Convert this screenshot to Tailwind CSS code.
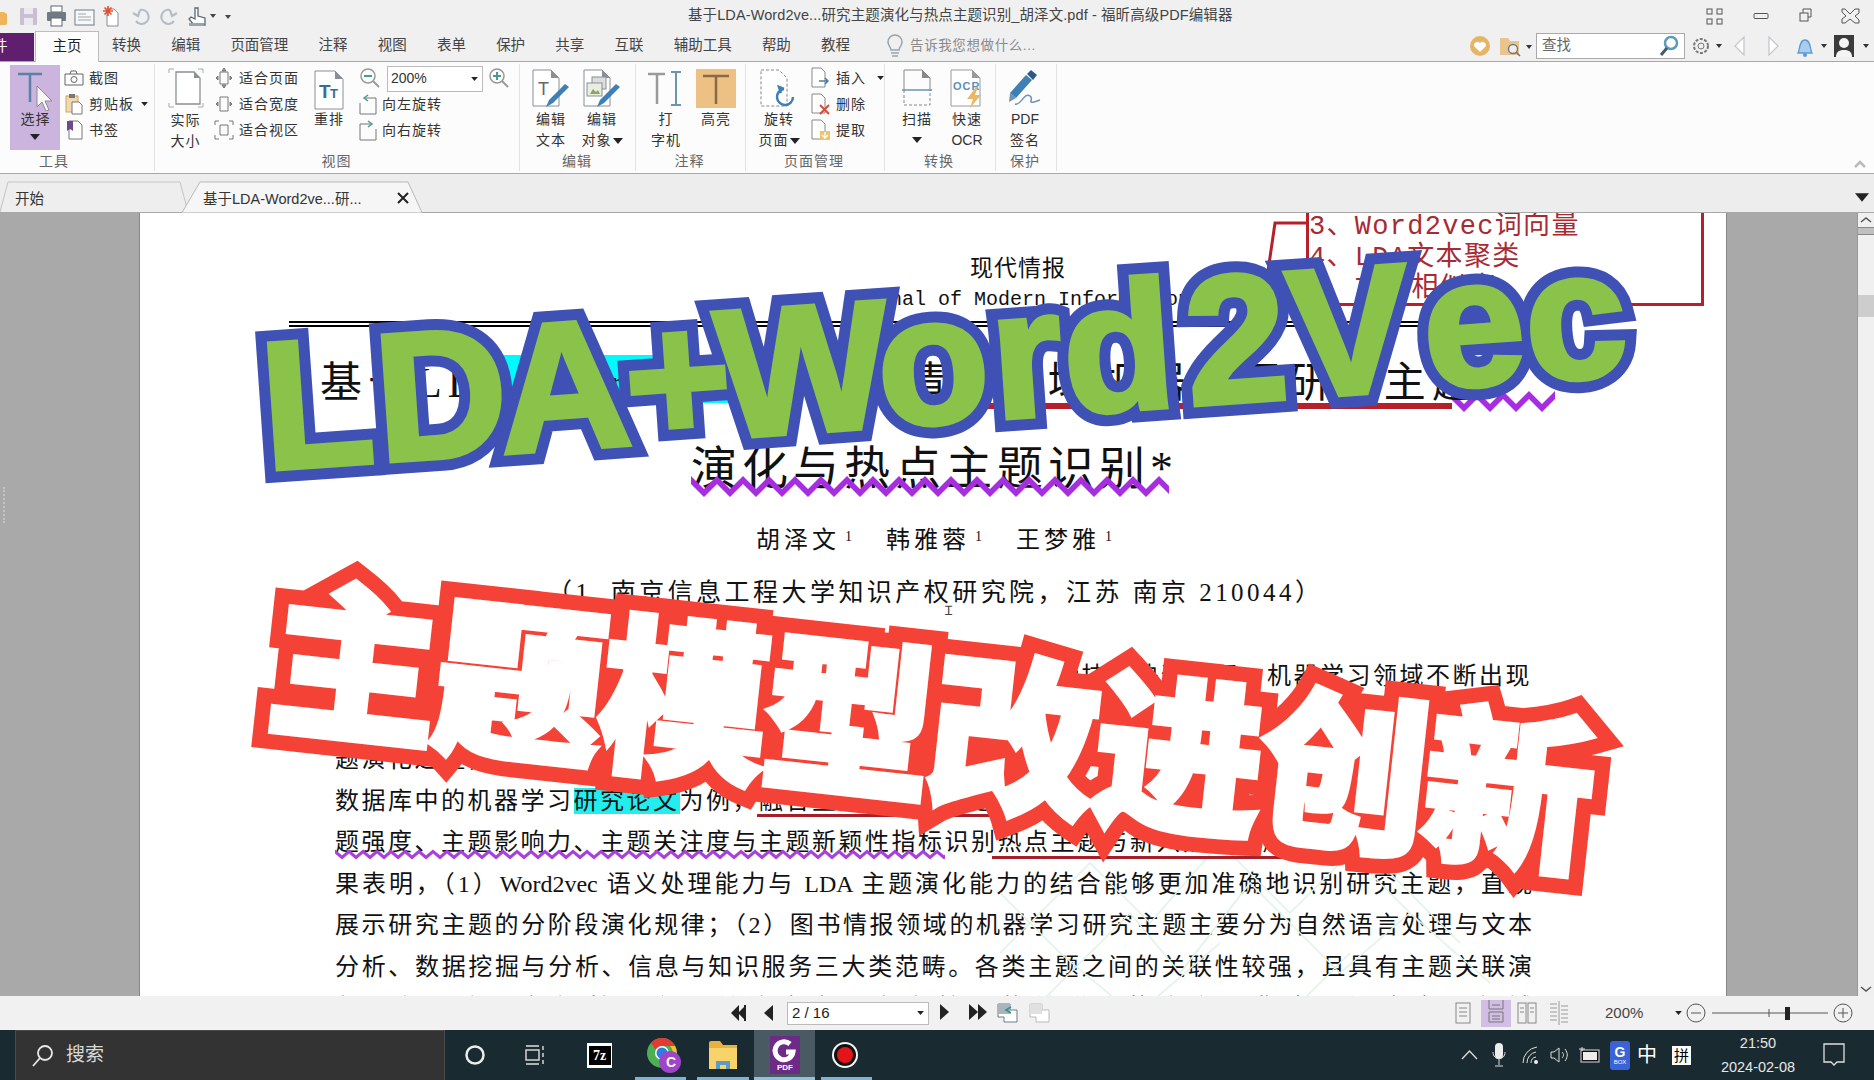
<!DOCTYPE html>
<html lang="zh">
<head>
<meta charset="utf-8">
<title>福昕高级PDF编辑器</title>
<script src="https://cdn.jsdelivr.net/npm/@tailwindcss/browser@4"></script>
</head>
<body class="overflow-hidden">
<svg class="absolute w-0 h-0">
  <defs>
    <symbol id="tri" viewBox="0 0 10 6"><path d="M0 0h10L5 6z" fill="#222"/></symbol>
    <pattern id="wavebig" width="26" height="24" patternUnits="userSpaceOnUse"><path d="M-13 18L0 5 13 18 26 5 39 18" fill="none" stroke="#a62ee0" stroke-width="5.500"/></pattern>
    <pattern id="wavesmall" width="14" height="13" patternUnits="userSpaceOnUse"><path d="M-7 9.500L0 3.500 7 9.500 14 3.500 21 9.500" fill="none" stroke="#a93fdc" stroke-width="3.200"/></pattern>
  </defs>
</svg>
<div class="relative w-[1874px] h-[1080px] overflow-hidden flex flex-col bg-[#f0f0f0] text-[#333] font-['Liberation_Sans','Noto_Sans_CJK_SC',sans-serif]">

  <!-- title bar -->
  <div class="h-[31px] flex items-center shrink-0">
    <div class="w-[688px] flex items-center h-full relative">
      <svg width="240" height="24" viewBox="0 0 240 24" class="shrink-0">
        <path d="M-4 8h8l3 2v9a2 2 0 0 1-2 2H-4z" fill="#efb55d"/>
        <rect x="20" y="4" width="17" height="17" rx="1" fill="#c9bfd4"/><rect x="24" y="4" width="9" height="6" fill="#ece8f0"/><rect x="24" y="14" width="9" height="7" fill="#ece8f0"/>
        <rect x="51" y="2" width="11" height="6" fill="#fff" stroke="#5c6770"/><rect x="47" y="8" width="19" height="9" rx="1" fill="#6f7a84"/><rect x="51" y="14" width="11" height="8" fill="#fff" stroke="#5c6770"/>
        <rect x="75" y="6" width="19" height="15" fill="#f8f8f8" stroke="#6f7a84"/><path d="M78 10h8M78 13h13M78 16h13" stroke="#9aa3ab"/>
        <path d="M107 5h7l4 4v13h-11z" fill="#fff" stroke="#8a8f96"/><path d="M108 2v10M103 7h10M104.500 3.500l7 7M111.500 3.500l-7 7" stroke="#e0502f" stroke-width="1.600"/>
        <path d="M140 6a7 7 0 1 1-4 11M140 6l-2 6-5-3" fill="none" stroke="#b5bcc4" stroke-width="2.200"/>
        <path d="M170 6a7 7 0 1 0 4 11M170 6l2 6 5-3" fill="none" stroke="#b5bcc4" stroke-width="2.200"/>
        <path d="M195 4v11l-4-2-2 2 5 6h11v-7l-7-2V4z" fill="#fff" stroke="#5c6770" stroke-width="1.300"/><rect x="189" y="19" width="15" height="3" fill="#9aa3ab"/>
        <path d="M210 10h6l-3 4zM225 8h6M225 11h6l-3 4z" fill="#444"/>
      </svg>
    </div>
    <div class="text-[14.5px] tracking-[0.1px] text-[#444] whitespace-nowrap w-[556px]">基于LDA-Word2ve...研究主题演化与热点主题识别_胡泽文.pdf - 福昕高级PDF编辑器</div>
    <div class="ml-[462px] w-[168px] relative h-full flex items-center">
      <svg width="168" height="20" viewBox="0 0 168 20">
        <g fill="none" stroke="#555"><rect x="1" y="3" width="5" height="5"/><rect x="11" y="3" width="5" height="5"/><rect x="1" y="13" width="5" height="5"/><rect x="11" y="13" width="5" height="5"/>
        <rect x="48" y="7.500" width="14" height="5" rx="1"/><rect x="94" y="7" width="8" height="8"/><path d="M97 7V3h8v8h-3"/>
        <path d="M139 3l5 5 5-5 4 0 0 4-4 3 4 4 0 3-4 0-5-4-5 4-3 0 0-4 4-3-4-4 0-3z"/></g>
      </svg>
    </div>
  </div>

  <!-- ribbon tabs -->
  <div class="h-[31px] flex shrink-0 border-b border-[#a8a8a8] relative">
    <div class="w-[34px] mt-[2px] h-[28px] bg-[#5f1f6e] text-white text-[14.5px] flex items-center overflow-hidden"><span class="ml-[-7px]">件</span></div>
    <div class="ml-[1px] w-[64px] h-[31px] bg-[#fcfcfc] border border-b-0 border-[#bcbcbc] text-[14.5px] flex items-center justify-center text-[#222]">主页</div>
    <div class="ml-[13px] flex items-center gap-[30.2px] text-[14.5px] text-[#444]">
      <span>转换</span><span>编辑</span><span>页面管理</span><span>注释</span><span>视图</span><span>表单</span><span>保护</span><span>共享</span><span>互联</span><span>辅助工具</span><span>帮助</span><span>教程</span>
    </div>
    <div class="ml-[36px] flex items-center gap-[6px]">
      <svg width="18" height="24" viewBox="0 0 18 24" fill="none" stroke="#9aa3ab" stroke-width="1.500"><path d="M5 16c0-3-3-4-3-8a7 7 0 0 1 14 0c0 4-3 5-3 8zM5 19h8M6 22h6"/></svg>
      <span class="text-[13.500px] text-[#8a8a8a] tracking-[0.6px]">告诉我您想做什么...</span>
    </div>
    <div class="absolute left-[1469px] top-0 h-full w-[405px] flex items-center">
      <svg width="67" height="24" viewBox="0 0 67 24" class="shrink-0">
        <circle cx="11" cy="12" r="10" fill="#e5b465"/><path d="M11 18l-6-6a3.500 3.500 0 0 1 6-3 3.500 3.500 0 0 1 6 3z" fill="#fff"/>
        <path d="M31 4h8l2 3h9v14H31z" fill="#e8c48e"/><circle cx="44" cy="15" r="4.500" fill="#eee" stroke="#777" stroke-width="1.400"/><path d="M47 18l4 4" stroke="#777" stroke-width="1.600"/>
        <path d="M57 11h6l-3 4z" fill="#333"/>
      </svg>
      <div class="w-[149px] h-[26px] bg-white border border-[#aaa] flex items-center justify-between px-[5px]">
        <span class="text-[14.5px] text-[#666]">查找</span>
        <svg width="20" height="22" viewBox="0 0 20 22" fill="none"><circle cx="12" cy="8" r="6" stroke="#5d9bbd" stroke-width="2.500"/><path d="M8 13l-6 7" stroke="#3f5a78" stroke-width="3"/></svg>
      </div>
      <svg width="189" height="24" viewBox="0 0 189 24" class="shrink-0">
        <circle cx="16" cy="12" r="7" fill="none" stroke="#777" stroke-width="2" stroke-dasharray="3 1.500"/><circle cx="16" cy="12" r="3" fill="none" stroke="#777"/>
        <path d="M31 10h6l-3 4z" fill="#333"/>
        <path d="M59 3v18l-9-9z" fill="#fff" stroke="#c4c8cc" stroke-width="1.300"/><path d="M84 3v18l9-9z" fill="#fff" stroke="#c4c8cc" stroke-width="1.300"/>
        <path d="M113 19c2-3 1-13 7-13s5 10 7 13z" fill="#a8cdee" stroke="#5b9bd5" stroke-width="1.300"/><circle cx="120" cy="21" r="2" fill="#5b9bd5"/>
        <path d="M136 10h6l-3 4z" fill="#333"/>
        <rect x="149" y="1" width="20" height="22" fill="#3b3b3b"/><circle cx="159" cy="9" r="5" fill="#f4f4f4"/><path d="M151 23c0-6 4-7 8-7s8 1 8 7z" fill="#f4f4f4"/>
        <path d="M178 10h6l-3 4z" fill="#333"/>
      </svg>
    </div>
  </div>

  <!-- ribbon -->
  <div class="h-[112px] shrink-0 bg-[#fcfcfc] border-b border-[#a8a8a8] flex text-[14px] tracking-[1px] text-[#333] relative">

    <div class="w-[155px] flex flex-col border-r border-[#e2e2e2] my-[2px]">
      <div class="h-[88px] flex pl-[10px] pt-[1px]">
        <div class="w-[50px] h-[85px] bg-[#cbb5df] flex flex-col items-center">
          <svg width="44" height="44" viewBox="0 0 44 44" class="mt-[2px] shrink-0"><path d="M5 7h24M17 7v28" stroke="#5a82a8" stroke-width="2.500" fill="none"/><path d="M24 19v21l5-5 4 9 3-1-4-9h7z" fill="#f7f7f7" stroke="#8b8b8b"/></svg>
          <span class="leading-[21px] mt-[-2px] mr-[-1px]">选择</span>
          <svg width="10" height="6" class="mt-[4px]"><use href="#tri"/></svg>
        </div>
        <div class="ml-[4px] flex flex-col">
          <div class="h-[26px] flex items-center gap-[5px]"><svg width="20" height="18" viewBox="0 0 20 18" fill="none" stroke="#666"><path d="M1 5h18v11H1zM6 5l1-3h5l1 3"/><circle cx="10" cy="10.500" r="3"/></svg><span>截图</span></div>
          <div class="h-[26px] flex items-center gap-[5px]"><svg width="20" height="22" viewBox="0 0 20 22"><rect x="2" y="3" width="12" height="16" fill="#f1d9ad" stroke="#caa569"/><rect x="5" y="1" width="6" height="4" fill="#777"/><path d="M8 9h7l3 3v9H8z" fill="#fff" stroke="#777"/></svg><span>剪贴板</span><svg width="7" height="4" class="ml-[2px]"><use href="#tri"/></svg></div>
          <div class="h-[26px] flex items-center gap-[5px]"><svg width="20" height="22" viewBox="0 0 20 22"><path d="M5 2h9l4 4v14H5z" fill="#fff" stroke="#777"/><path d="M3 2h6v10l-3-2-3 2z" fill="#6d4a8c"/></svg><span>书签</span></div>
        </div>
      </div>
      <div class="h-[18px] leading-[18px] text-center text-[#666] pr-[46px]">工具</div>
    </div>

    <div class="w-[365px] flex flex-col border-r border-[#e2e2e2] my-[2px]">
      <div class="h-[88px] flex">
        <div class="ml-[13px] w-[35px] flex flex-col items-center">
          <svg width="36" height="40" viewBox="0 0 36 40" class="mt-[4px]"><path d="M8 4h18l6 6v26H8z" fill="#fff" stroke="#8a8f96" stroke-width="1.300"/><path d="M26 4v6h6z" fill="#8a8f96"/><path d="M1 5V1h5M35 5V1h-5M1 35v4h5M35 35v4h-5" stroke="#aaa" fill="none"/></svg>
          <span class="leading-[21px] mt-[2px] text-center w-[36px]">实际大小</span>
        </div>
        <div class="ml-[11px] flex flex-col pt-[1px]">
          <div class="h-[26px] flex items-center gap-[5px]"><svg width="20" height="20" viewBox="0 0 20 20" fill="none" stroke="#777"><path d="M6 4h8v12H6z"/><path d="M10 0l2 3H8zM10 20l2-3H8zM2 10l2-2v4zM18 10l-2-2v4z" fill="#999"/></svg><span>适合页面</span></div>
          <div class="h-[26px] flex items-center gap-[5px]"><svg width="20" height="20" viewBox="0 0 20 20" fill="none" stroke="#777"><path d="M6 3h8v14H6z"/><path d="M2 10l2-2v4zM18 10l-2-2v4z" fill="#999"/></svg><span>适合宽度</span></div>
          <div class="h-[26px] flex items-center gap-[5px]"><svg width="20" height="20" viewBox="0 0 20 20" fill="none" stroke="#777"><path d="M6 5h8v10H6zM1 5V1h4M19 5V1h-4M1 15v4h4M19 15v4h-4"/></svg><span>适合视区</span></div>
        </div>
        <div class="ml-[15px] w-[30px] flex flex-col items-center">
          <svg width="30" height="40" viewBox="0 0 30 40" class="mt-[6px]"><path d="M1 1h20l8 8v30H1z" fill="#fff" stroke="#8a8f96"/><path d="M21 1v8h8z" fill="#8a8f96"/><text x="5" y="28" font-size="19" font-weight="700" fill="#3c6d8f" font-family="Liberation Sans">T</text><text x="16" y="28" font-size="13" font-weight="700" fill="#3c6d8f" font-family="Liberation Sans">T</text></svg>
          <span class="leading-[21px] whitespace-nowrap mt-[-1px]">重排</span>
        </div>
        <div class="ml-[15px] flex flex-col pt-[1px]">
          <div class="h-[26px] flex items-center">
            <svg width="22" height="22" viewBox="0 0 22 22" fill="none"><circle cx="9" cy="9" r="7" stroke="#999" stroke-width="1.500"/><path d="M5 9h8" stroke="#4d9a8e" stroke-width="2"/><path d="M14 14l6 6" stroke="#999" stroke-width="2"/></svg>
            <div class="ml-[6px] w-[96px] h-[26px] bg-white border border-[#bbb] flex items-center justify-between pl-[3px] pr-[4px] text-[14px] tracking-[0px] mt-[1px]"><span>200%</span><svg width="7" height="4"><use href="#tri"/></svg></div>
            <svg width="22" height="22" viewBox="0 0 22 22" fill="none" class="ml-[5px]"><circle cx="9" cy="9" r="7" stroke="#999" stroke-width="1.500"/><path d="M5 9h8M9 5v8" stroke="#4d9a8e" stroke-width="2"/><path d="M14 14l6 6" stroke="#999" stroke-width="2"/></svg>
          </div>
          <div class="h-[26px] flex items-center gap-[5px]"><svg width="18" height="22" viewBox="0 0 18 22" fill="none" stroke="#777"><path d="M5 5h12v16H1V10"/><path d="M9 2L5 5l4 3" stroke="#4d9a8e" stroke-width="1.500"/></svg><span>向左旋转</span></div>
          <div class="h-[26px] flex items-center gap-[5px]"><svg width="18" height="22" viewBox="0 0 18 22" fill="none" stroke="#777"><path d="M13 5H1v16h16V10"/><path d="M9 2l4 3-4 3" stroke="#4d9a8e" stroke-width="1.500"/></svg><span>向右旋转</span></div>
        </div>
      </div>
      <div class="h-[18px] leading-[18px] text-center text-[#666] pr-[1px]">视图</div>
    </div>

    <div class="w-[116px] flex flex-col border-r border-[#e2e2e2] my-[2px]">
      <div class="h-[88px] flex">
        <div class="ml-[13px] w-[36px] flex flex-col items-center">
          <svg width="38" height="40" viewBox="0 0 38 40" class="mt-[5px]"><path d="M1 1h18l8 8v28H1z" fill="#fff" stroke="#8a8f96"/><path d="M19 1v8h8z" fill="#8a8f96"/><text x="6" y="26" font-size="18" fill="#666" font-family="Liberation Sans">T</text><path d="M14 38l3-7 16-16 4 3-16 16z" fill="#3e7fb5"/></svg>
          <span class="leading-[21px] text-center w-[30px]">编辑文本</span>
        </div>
        <div class="ml-[15px] w-[36px] flex flex-col items-center">
          <svg width="38" height="40" viewBox="0 0 38 40" class="mt-[5px]"><path d="M1 1h18l8 8v28H1z" fill="#fff" stroke="#8a8f96"/><path d="M19 1v8h8z" fill="#8a8f96"/><rect x="9" y="8" width="14" height="12" fill="#ddd" stroke="#8a8f96"/><rect x="4" y="14" width="15" height="13" fill="#e8eee0" stroke="#8a8f96"/><path d="M7 25l3-5 3 3 2-2 2 4z" fill="#8aa46a"/><path d="M14 38l3-7 16-16 4 3-16 16z" fill="#3e7fb5"/></svg>
          <span class="leading-[21px] whitespace-nowrap">编辑</span>
          <span class="leading-[21px] whitespace-nowrap flex items-center">对象<svg width="10" height="6" class="ml-[1px]"><use href="#tri"/></svg></span>
        </div>
      </div>
      <div class="h-[18px] leading-[18px] text-center text-[#666] pr-[1px]">编辑</div>
    </div>

    <div class="w-[110px] flex flex-col border-r border-[#e2e2e2] my-[2px]">
      <div class="h-[88px] flex">
        <div class="ml-[12px] w-[36px] flex flex-col items-center">
          <svg width="38" height="40" viewBox="0 0 38 40" class="mt-[5px]"><path d="M1 5h17M10 5v30" stroke="#9a9a9a" stroke-width="2.500" fill="none"/><path d="M24 3h10M29 3v33M24 36h10" stroke="#6d94b0" stroke-width="2" fill="none"/></svg>
          <span class="leading-[21px] whitespace-nowrap">打</span>
          <span class="leading-[21px] whitespace-nowrap">字机</span>
        </div>
        <div class="ml-[12px] w-[40px] flex flex-col items-center">
          <div class="w-[40px] h-[39px] bg-[#edc183] mt-[5px] flex items-center justify-center"><svg width="30" height="34" viewBox="0 0 30 34"><path d="M2 4h26M15 4v28" stroke="#8a6a45" stroke-width="2.500" fill="none"/></svg></div>
          <span class="leading-[21px] whitespace-nowrap mt-[1px]">高亮</span>
        </div>
      </div>
      <div class="h-[18px] leading-[18px] text-center text-[#666] pr-[2px]">注释</div>
    </div>

    <div class="w-[139px] flex flex-col border-r border-[#e2e2e2] my-[2px]">
      <div class="h-[88px] flex">
        <div class="ml-[12px] w-[42px] flex flex-col items-center">
          <svg width="38" height="40" viewBox="0 0 38 40" class="mt-[5px]"><path d="M1 1h18l8 8v28H1z" fill="#fff" stroke="#888" stroke-dasharray="3 2"/><path d="M33 28a8 8 0 1 1-9-8M24 20l-5-2 2 6" fill="none" stroke="#3e7fb5" stroke-width="2.500"/></svg>
          <span class="leading-[21px] whitespace-nowrap">旋转</span>
          <span class="leading-[21px] whitespace-nowrap flex items-center">页面<svg width="10" height="6" class="ml-[1px]"><use href="#tri"/></svg></span>
        </div>
        <div class="ml-[11px] flex flex-col pt-[1px]">
          <div class="h-[26px] flex items-center gap-[5px]"><svg width="20" height="22" viewBox="0 0 20 22" fill="none"><path d="M1 1h9l4 4v15H1z" fill="#fff" stroke="#888"/><path d="M8 14h9M14 11l3 3-3 3" stroke="#4a7fa8" stroke-width="1.500"/></svg><span>插入</span><svg width="7" height="4" class="ml-[6px]"><use href="#tri"/></svg></div>
          <div class="h-[26px] flex items-center gap-[5px]"><svg width="20" height="22" viewBox="0 0 20 22" fill="none"><path d="M1 1h9l4 4v15H1z" fill="#fff" stroke="#888"/><path d="M9 12l9 9M18 12l-9 9" stroke="#d0503d" stroke-width="2"/></svg><span>删除</span></div>
          <div class="h-[26px] flex items-center gap-[5px]"><svg width="20" height="22" viewBox="0 0 20 22" fill="none"><path d="M1 1h9l4 4v15H1z" fill="#fff" stroke="#888"/><rect x="9" y="12" width="10" height="9" fill="#eec36e"/><path d="M14 13v6M11 16l3 3 3-3" stroke="#fff" stroke-width="1.300"/></svg><span>提取</span></div>
        </div>
      </div>
      <div class="h-[18px] leading-[18px] text-center text-[#666] pr-[2px]">页面管理</div>
    </div>

    <div class="w-[111px] flex flex-col border-r border-[#e2e2e2] my-[2px]">
      <div class="h-[88px] flex">
        <div class="ml-[16px] w-[32px] flex flex-col items-center">
          <svg width="32" height="40" viewBox="0 0 32 40" class="mt-[5px]" fill="none"><path d="M3 21V1h18l8 8v12" stroke="#888"/><path d="M21 1v8h8z" fill="#888"/><path d="M1 21h30" stroke="#6d94b0" stroke-width="1.500"/><path d="M3 21v15h26V21" stroke="#888" stroke-dasharray="3 2"/></svg>
          <span class="leading-[21px] whitespace-nowrap">扫描</span>
          <svg width="10" height="6" class="mt-[7px]"><use href="#tri"/></svg>
        </div>
        <div class="ml-[17px] w-[34px] flex flex-col items-center">
          <svg width="34" height="40" viewBox="0 0 34 40" class="mt-[5px]"><path d="M1 1h21l8 8v28H1z" fill="#fff" stroke="#999"/><path d="M22 1v8h8z" fill="#999"/><text x="3" y="21" font-size="11" font-weight="700" fill="#5d8fb5" font-family="Liberation Sans">OCR</text><path d="M26 18l-9 12h6l-3 9 11-13h-6l3-8z" fill="#e9b867"/></svg>
          <span class="leading-[21px] whitespace-nowrap">快速</span>
          <span class="leading-[21px] whitespace-nowrap tracking-[0px]">OCR</span>
        </div>
      </div>
      <div class="h-[18px] leading-[18px] text-center text-[#666] pr-[2px]">转换</div>
    </div>

    <div class="w-[61px] flex flex-col border-r border-[#e2e2e2] my-[2px]">
      <div class="h-[88px] flex justify-center">
        <div class="w-[34px] flex flex-col items-center mr-[2px]">
          <svg width="34" height="40" viewBox="0 0 34 40" class="mt-[4px]" fill="none"><path d="M2 25L18 7l6 5L8 30z" fill="#3e7fb5"/><path d="M19 6l4-4 6 5-4 5z" fill="#2c5a85"/><path d="M2 25l-1 9 7-4z" fill="#6d94b0"/><path d="M7 36c6 2 9-12 15-8 5 3-6 10 10 4" stroke="#6d94b0" stroke-width="1.500"/></svg>
          <span class="leading-[21px] mt-[1px] whitespace-nowrap tracking-[0px]">PDF</span>
          <span class="leading-[21px] whitespace-nowrap">签名</span>
        </div>
      </div>
      <div class="h-[18px] leading-[18px] text-center text-[#666] pr-[2px]">保护</div>
    </div>

    <svg width="12" height="8" viewBox="0 0 12 8" class="absolute left-[1854px] top-[98px]"><path d="M1 7l5-5 5 5" fill="none" stroke="#bbb" stroke-width="2.500"/></svg>
  </div>

  <!-- document tabs -->
  <div class="h-[39px] shrink-0 bg-[#ededed] border-b border-[#a8a8a8] relative flex">
    <svg class="absolute left-0 top-0" width="430" height="39" viewBox="0 0 430 39" fill="none"><path d="M0 38L8 8h172l8 30" fill="#eee" stroke="#c4c4c4"/><path d="M182 38.500L200 8h208l14 30.500" fill="#f6f6f6" stroke="#b8b8b8"/></svg>
    <span class="relative ml-[15px] mt-[15px] text-[14.5px] leading-[20px] text-[#333]">开始</span>
    <span class="relative ml-[159px] mt-[15px] text-[14.5px] leading-[20px] text-[#333] w-[170px] whitespace-nowrap">基于LDA-Word2ve...研...</span>
    <svg class="relative ml-[24px] mt-[18px]" width="12" height="12" viewBox="0 0 12 12"><path d="M1 1l10 10M11 1L1 11" stroke="#222" stroke-width="2"/></svg>
    <svg width="14" height="9" class="absolute left-[1855px] top-[19px]"><use href="#tri"/></svg>
  </div>

  <!-- content -->
  <div class="flex h-[783px] shrink-0">
    <div class="w-[140px] bg-[#a9a9a9] border-r border-[#888] flex items-center pb-[200px]"><div class="ml-[3px] w-[2px] h-[36px] border-l-2 border-dotted border-[#c4c4c4]"></div></div>

    <!-- PDF page -->
    <div class="relative w-[1586px] bg-white overflow-hidden font-['Liberation_Serif','Noto_Sans_CJK_SC',serif] text-[#111]">
      <svg class="absolute left-[860px] top-[620px]" width="560" height="170" viewBox="0 0 560 170" fill="none" stroke="#dff2e3" stroke-width="1.500"><path d="M0 120L90 30l60 60L220 10l70 70 60-60 70 70M40 170l90-90 50 60 70-90 90 90 70-60 80 70M150 170l70-60M300 170l50-50M0 60l60 60 60 50M380 30l80 80"/></svg>

      <!-- red box -->
      <div class="absolute left-[1166px] top-[-4px] w-[398px] h-[97px] border-[3px] border-t-0 border-[#b5202a] text-[#a92a32] text-[27px] leading-[31px] font-['Liberation_Mono','Noto_Sans_CJK_SC',monospace] pt-[3px] whitespace-nowrap tracking-[1.3px]">
        <div>3、Word2vec词向量</div>
        <div>4、LDA文本聚类</div>
        <div>5、文本相似度</div>
      </div>
      <svg class="absolute left-[1126px] top-[0]" width="42" height="60" viewBox="0 0 42 60" fill="none"><path d="M41 10H9L2 58" stroke="#b5202a" stroke-width="3"/></svg>

      <div class="pt-[42px] pl-[830px] text-[23px] leading-[28px] tracking-[1px] whitespace-nowrap">现代情报</div>
      <div class="mt-[3px] pl-[702px] text-[20px] leading-[28px] font-['Liberation_Mono',monospace] whitespace-nowrap">Journal of Modern Information</div>
      <div class="ml-[149px] w-[1133px] mt-[7px] h-[6px] border-y-2 border-black"></div>

      <!-- title -->
      <div class="relative h-[100px] mt-[29px]">
        <div class="absolute left-[354px] top-[-1px] w-[251px] h-[48px] bg-[#00fbff]"></div>
        <div class="absolute left-[748px] top-[47px] w-[564px] h-[6px] bg-[#b5202a]"></div>
        <svg class="absolute left-[1311px] top-[34px]" width="104" height="24" fill="none"><rect width="104" height="24" fill="url(#wavebig)"/></svg>
        <div class="relative pl-[180px] text-[42px] leading-[54px] tracking-[6px] whitespace-nowrap">基于LDA-Word2vec的图书情报领域机器学习研究主题</div>
      </div>

      <!-- subtitle -->
      <div class="relative mt-[-18px] pl-[551px] text-[46px] leading-[62px] tracking-[5px] whitespace-nowrap">演化与热点主题识别*
        <svg class="absolute left-[551px] top-[37px]" width="478" height="24"><rect width="478" height="24" fill="url(#wavebig)"/></svg>
      </div>

      <!-- authors -->
      <div class="mt-[23px] pl-[616px] text-[24px] leading-[34px] tracking-[4px] whitespace-nowrap">胡泽文<sup class="text-[14px] ml-[5px]">1</sup><span class="ml-[30px]">韩雅蓉</span><sup class="text-[14px] ml-[5px]">1</sup><span class="ml-[30px]">王梦雅</span><sup class="text-[14px] ml-[5px]">1</sup></div>
      <div class="mt-[19px] pl-[407px] text-[25px] leading-[34px] tracking-[3.450px] whitespace-nowrap">（1. 南京信息工程大学知识产权研究院，江苏 南京 210044）
        <span class="absolute left-[805px] top-[391px] text-[13px] leading-none text-[#444]">Ɪ</span>
      </div>

      <!-- abstract -->
      <div class="text-[24px] leading-[41.500px]">
        <div class="mt-[46px] pl-[195px] w-[1392px] text-right whitespace-nowrap tracking-[2.500px]">随着大数据与人工智能技术快速发展，机器学习领域不断出现</div>
        <div class="pl-[195px] h-[41.500px]"></div>
        <div class="pl-[195px] whitespace-nowrap tracking-[2.500px]">题演化过程，</div>
        <div class="pl-[195px] whitespace-nowrap tracking-[2.500px] relative">数据库中的机器学习<span class="bg-[#22eeee]">研究论文</span>为例，融合主题强度与主题影响力
          <div class="absolute left-[617px] top-[33px] w-[400px] h-[3px] bg-[#a3202a]"></div>
        </div>
        <div class="pl-[195px] whitespace-nowrap tracking-[2.500px] relative">题强度、主题影响力、主题关注度与主题新颖性指标识别热点主题与新兴热点主题
          <svg class="absolute left-[195px] top-[26px]" width="610" height="13"><rect width="610" height="13" fill="url(#wavesmall)"/></svg>
          <div class="absolute left-[852px] top-[34px] w-[292px] h-[3px] bg-[#a3202a]"></div>
        </div>
        <div class="ml-[195px] w-[1197px] text-justify [text-align-last:justify] whitespace-nowrap">果表明，（1）Word2vec 语义处理能力与 LDA 主题演化能力的结合能够更加准确地识别研究主题，直观</div>
        <div class="ml-[195px] w-[1197px] text-justify [text-align-last:justify]">展示研究主题的分阶段演化规律；（2）图书情报领域的机器学习研究主题主要分为自然语言处理与文本</div>
        <div class="ml-[195px] w-[1197px] text-justify [text-align-last:justify]">分析、数据挖掘与分析、信息与知识服务三大类范畴。各类主题之间的关联性较强，且具有主题关联演</div>
        <div class="ml-[195px] w-[1197px] text-justify [text-align-last:justify]">化规律，主题新颖性与主题关注度之间存在较强的关联，热点主题集中于深度学习领域</div>
      </div>
    </div>

    <div class="w-[131px] bg-[#a9a9a9] border-l border-[#888]"></div>

    <!-- scrollbar -->
    <div class="w-[17px] bg-[#f0f0f0] flex flex-col items-center border-l border-[#999]">
      <svg width="12" height="8" viewBox="0 0 12 8" class="mt-[3px]"><path d="M1 6l5-4 5 4" fill="none" stroke="#555" stroke-width="1.500"/></svg>
      <div class="mt-[3px] w-full h-[8px] bg-[#c0c0c0] border-y border-[#888]"></div>
      <div class="mt-[60px] w-full h-[22px] bg-[#cdcdcd]"></div>
      <svg width="12" height="8" viewBox="0 0 12 8" class="mt-auto mb-[3px]"><path d="M1 2l5 4 5-4" fill="none" stroke="#555" stroke-width="1.500"/></svg>
    </div>
  </div>

  <!-- status bar -->
  <div class="h-[34px] shrink-0 bg-[#f1f1f1] flex items-center relative">
    <div class="ml-[731px] flex items-center">
      <svg width="54" height="18" viewBox="0 0 54 18"><path d="M8 1v16L0 9zM15 1v16L7 9z" fill="#222"/><rect x="13" y="1" width="2" height="16" fill="#222"/><path d="M42 1v16l-9-8z" fill="#222"/></svg>
      <div class="ml-[2px] w-[142px] h-[23px] bg-white border border-[#bbb] flex items-center justify-between px-[4px] text-[15px] text-[#222]"><span>2 / 16</span><svg width="7" height="4"><use href="#tri"/></svg></div>
      <svg width="122" height="24" viewBox="0 0 122 24" class="ml-[10px]"><path d="M1 3v16l9-8z" fill="#222"/><path d="M30 3v16l9-8zM39 3v16l9-8z" fill="#222"/><path d="M59 3h12v6h7v12H65v-5h-6z" fill="#fff" stroke="#6c7a87"/><rect x="59" y="3" width="12" height="10" fill="#a9b4bd"/><path d="M72 6l-5 3 5 3" fill="none" stroke="#3a8f83" stroke-width="1.500"/><path d="M91 3h12v6h7v12H97v-5h-6z" fill="#fff" stroke="#bbb"/><rect x="91" y="3" width="12" height="10" fill="#e0e0e0"/></svg>
    </div>
    <div class="absolute left-[1455px] top-0 h-full flex items-center">
      <svg width="16" height="22" viewBox="0 0 16 22" fill="none" stroke="#888"><rect x="1" y="1" width="14" height="20"/><path d="M4 6h8M4 10h8M4 14h8"/></svg>
      <div class="ml-[10px] w-[30px] h-[27px] bg-[#d2bde4] flex items-center justify-center"><svg width="18" height="26" viewBox="0 0 18 26" fill="none" stroke="#777"><path d="M2 0v9h14V0M2 12h14v10H2zM5 5h8M5 16h8M5 19h8"/></svg></div>
      <svg width="20" height="22" viewBox="0 0 20 22" fill="none" stroke="#888" class="ml-[6px]"><rect x="1" y="1" width="8" height="20"/><rect x="11" y="1" width="8" height="20"/><path d="M3 6h4M3 10h4M13 6h4M13 10h4"/></svg>
      <svg width="20" height="24" viewBox="0 0 20 24" fill="none" stroke="#999" class="ml-[12px]"><path d="M10 0v24M1 3h7M1 7h7M1 11h7M1 15h7M1 19h7M12 5h7M12 9h7M12 13h7M12 17h7M12 21h7"/></svg>
      <span class="ml-[36px] text-[15px] text-[#444]">200%</span>
      <svg width="7" height="4" class="ml-[32px]"><use href="#tri"/></svg>
      <svg width="170" height="22" viewBox="0 0 170 22" fill="none" stroke="#555" class="ml-[4px]"><circle cx="10" cy="11" r="9"/><path d="M5 11h10"/><path d="M26 11h116" stroke="#555"/><path d="M83 7v8"/><rect x="99" y="5" width="5" height="13" fill="#222" stroke="none"/><circle cx="157" cy="11" r="9"/><path d="M152 11h10M157 6v10"/></svg>
    </div>
  </div>

  <!-- taskbar -->
  <div class="h-[50px] shrink-0 bg-[#1a2a31] flex relative text-white">
    <div class="ml-[15px] w-[430px] h-full bg-[#333333] border border-b-0 border-[#4b4b4b] flex items-center">
      <svg width="24" height="24" viewBox="0 0 24 24" fill="none" stroke="#e8e8e8" stroke-width="1.800" class="ml-[15px]"><circle cx="14" cy="9" r="7"/><path d="M9 14l-7 8"/></svg>
      <span class="ml-[11px] text-[19px] text-[#d8d8d8]">搜索</span>
    </div>
    <div class="flex items-center">
      <svg width="20" height="22" viewBox="0 0 20 22" class="ml-[20px]"><circle cx="10" cy="11" r="8.500" fill="none" stroke="#e8eef0" stroke-width="2.500"/></svg>
      <svg width="20" height="22" viewBox="0 0 20 22" fill="none" stroke="#e0e0e0" stroke-width="1.400" class="ml-[40px]"><rect x="1" y="6" width="13" height="10"/><path d="M1 2h13M1 20h13M18 2v4M18 9v4M18 16v4"/></svg>
      <div class="ml-[42px] w-[25px] h-[25px] bg-white flex items-center justify-center"><span class="bg-black text-white w-[22px] h-[19px] text-[14px] leading-[19px] font-bold text-center font-['Liberation_Serif',serif]">7z</span></div>
      <div class="ml-[35px] relative w-[34px] h-[38px]">
        <svg width="34" height="38" viewBox="0 0 34 38"><circle cx="15" cy="17" r="15" fill="#4caf50"/><path d="M15 2a15 15 0 0 1 13 8H15a7 7 0 0 0-6 4L4 7a15 15 0 0 1 11-5z" fill="#e53935"/><path d="M28 10a15 15 0 0 1-11 22l6-11a7 7 0 0 0 0-11z" fill="#fbc02d"/><circle cx="15" cy="17" r="7" fill="#fff"/><circle cx="15" cy="17" r="5.500" fill="#2a7de1"/><circle cx="23" cy="26" r="11" fill="#a044c9"/><text x="19" y="31" font-size="14" font-weight="700" fill="#fff" font-family="Liberation Sans">C</text></svg>
      </div>
      <svg width="30" height="34" viewBox="0 0 30 34" class="ml-[27px]"><path d="M1 5a2 2 0 0 1 2-2h9l3 4h14v5H1z" fill="#e7b23f"/><rect x="1" y="10" width="28" height="21" fill="#f7d36a"/><path d="M8 31v-8h14v8h-4v-4h-6v4z" fill="#5b9bc7"/></svg>
      <div class="ml-[16px] w-[61px] h-full bg-[#4a5a62] flex items-center justify-center">
        <svg width="30" height="38" viewBox="0 0 30 38"><rect width="30" height="38" fill="#6d2a86"/><path d="M20 8a9 9 0 1 0 3 8h-7" fill="none" stroke="#fff" stroke-width="5"/><text x="7" y="34" font-size="8" font-weight="700" fill="#fff" font-family="Liberation Sans">PDF</text></svg>
      </div>
      <svg width="28" height="32" viewBox="0 0 28 32" class="ml-[16px]"><circle cx="14" cy="16" r="13" fill="#f6f6f6"/><circle cx="14" cy="16" r="11" fill="#111"/><circle cx="14" cy="16" r="8" fill="#e3141a"/></svg>
    </div>
    <div class="absolute bottom-0 left-[635px] flex items-end">
      <div class="w-[51px] h-[3px] bg-[#7fb2d4]"></div><div class="ml-[11px] w-[52px] h-[3px] bg-[#7fb2d4]"></div><div class="ml-[5px] w-[61px] h-[3px] bg-[#8fc0e0]"></div><div class="ml-[6px] w-[51px] h-[3px] bg-[#7fb2d4]"></div>
    </div>

    <div class="absolute left-[1461px] top-0 h-full flex items-center">
      <svg width="17" height="10" viewBox="0 0 17 10" fill="none" stroke="#ddd" stroke-width="1.300"><path d="M1 9l7.500-8 7.500 8"/></svg>
      <svg width="14" height="24" viewBox="0 0 14 24" class="ml-[14px]"><rect x="3" y="0" width="8" height="16" rx="4" fill="#eee"/><path d="M1 9c0 9 12 9 12 0M7 16v6M3 23h8" fill="none" stroke="#ddd"/></svg>
      <svg width="18" height="20" viewBox="0 0 18 20" fill="none" stroke="#ddd" class="ml-[16px]"><path d="M1 18a16 16 0 0 1 14-16M5 18a11 11 0 0 1 9-11M9 18a6 6 0 0 1 5-6"/><circle cx="14" cy="17" r="2" fill="#eee" stroke="none"/></svg>
      <svg width="20" height="20" viewBox="0 0 20 20" fill="none" stroke="#ddd" class="ml-[10px]"><path d="M1 7h3l5-4v14l-5-4H1zM12 7c2 2 2 4 0 6M15 4c3 4 3 8 0 12"/></svg>
      <svg width="22" height="16" viewBox="0 0 22 16" class="ml-[8px]"><rect x="3" y="3" width="18" height="12" fill="#111" stroke="#ddd"/><rect x="5" y="5" width="14" height="8" fill="#eee"/><path d="M4 0v4M1 2h6" stroke="#ddd"/></svg>
      <div class="ml-[10px] w-[20px] h-[29px] bg-[#3b62d6] rounded-[3px] flex flex-col items-center justify-center leading-none"><span class="text-[14px] font-bold text-white">G</span><span class="text-[6px] text-white">BOX</span></div>
      <span class="ml-[7px] text-[20px] leading-none text-white">中</span>
      <div class="ml-[15px] w-[19px] h-[19px] bg-white text-black text-[15px] leading-[19px] text-center">拼</div>
    </div>
    <div class="absolute left-[1700px] top-0 w-[116px] h-full text-center text-[14.500px] leading-[24px] pt-[1px] text-[#e6e6e6]"><div>21:50</div><div>2024-02-08</div></div>
    <svg width="22" height="24" viewBox="0 0 22 24" fill="none" stroke="#e0e0e0" stroke-width="1.300" class="absolute left-[1823px] top-[13px]"><path d="M1 1h20v18h-7l-3 3-3-3H1z"/></svg>
  </div>

  <!-- thumbnail title art laid over the whole picture -->
  <svg class="absolute left-0 top-0 pointer-events-none" width="1874" height="1080" viewBox="0 0 1874 1080">
    <g transform="rotate(-4 262 470)" font-family="Liberation Sans" font-weight="700" font-size="182">
      <text x="266 380 503 630 722 883 997 1069 1192 1295 1430 1532" y="470" fill="#3f51b5" stroke="#3f51b5" stroke-width="27" stroke-linejoin="miter" stroke-miterlimit="2.500">LDA+Word2Vec</text>
      <text x="266 380 503 630 722 883 997 1069 1192 1295 1430 1532" y="470" fill="#8bc34a" stroke="#8bc34a" stroke-width="5">LDA+Word2Vec</text>
    </g>
    <g transform="rotate(6.200 262 719)" font-family="Noto Sans CJK SC" font-weight="900" font-size="170">
      <text x="264" y="719" textLength="1330" fill="#f44336" stroke="#f44336" stroke-width="36" stroke-linejoin="miter" stroke-miterlimit="2.500">主题模型改进创新</text>
      <text x="264" y="719" textLength="1330" fill="#fff" stroke="#fff" stroke-width="6">主题模型改进创新</text>
    </g>
  </svg>
</div>
</body>
</html>
